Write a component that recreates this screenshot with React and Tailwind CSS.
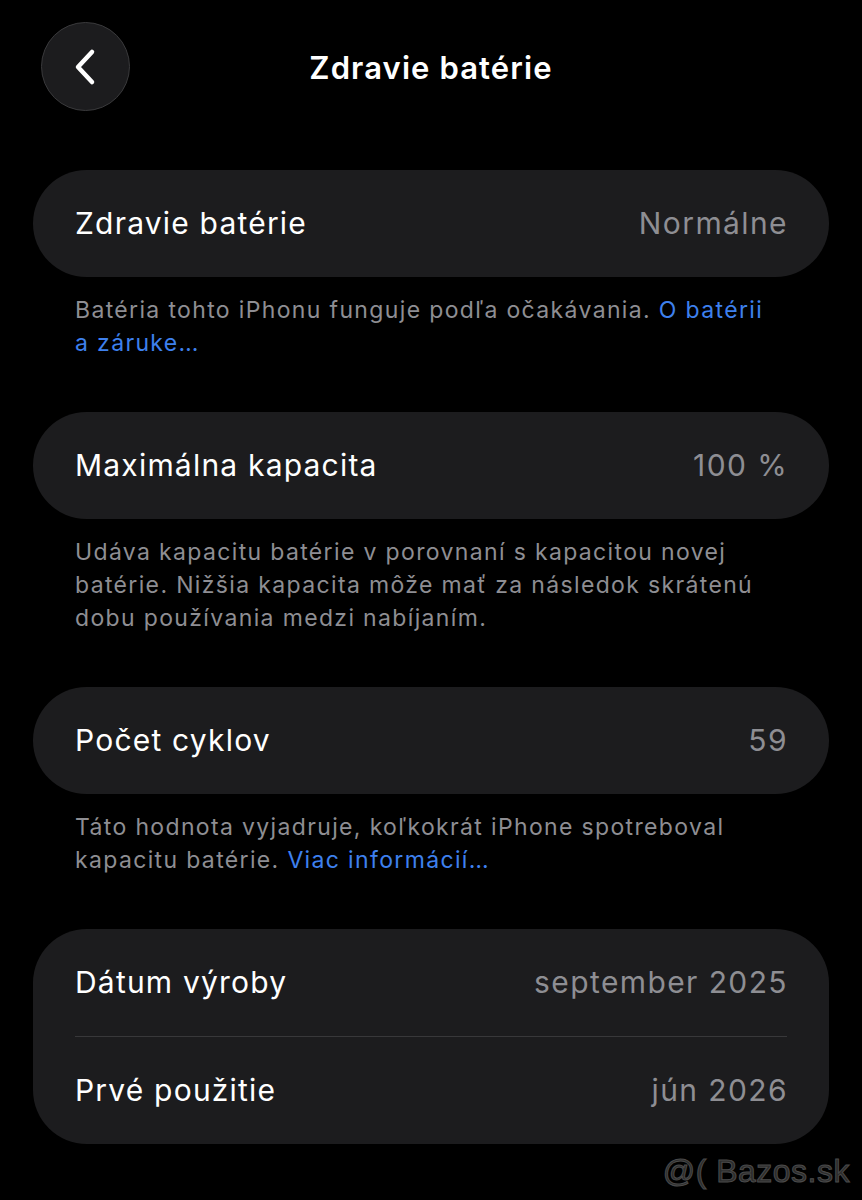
import React from "react";

const font = { fontFamily: "Inter, 'Noto Sans', sans-serif" };

function Row({ label, value }) {
  return (
    <div className="flex h-[107px] items-center justify-between pl-[42px] pr-[41px]">
      <span className="text-[30px] text-white tracking-[1.2px]">{label}</span>
      <span className="text-[30px] text-[#8e8e93] tracking-[1.4px]">{value}</span>
    </div>
  );
}

function Card({ children }) {
  return <div className="mx-[33px] rounded-[54px] bg-[#1c1c1e] overflow-hidden">{children}</div>;
}

function Note({ children }) {
  return (
    <p className="ml-[75px] w-[700px] mt-[17px] mb-[52px] text-[23px] leading-[33px] text-[#8e8e93] tracking-[1.35px]">
      {children}
    </p>
  );
}

export default function App() {
  return (
    <div className="relative min-h-[1200px] w-[862px] bg-black" style={font}>
      <div className="relative flex h-[111px] items-end">
        <button className="ml-[41px] flex h-[89px] w-[89px] items-center justify-center rounded-full border border-[#3a3a3c] bg-[#1c1c1e]">
          <svg width="30" height="40" viewBox="0 0 30 40" fill="none">
            <path d="M21 5 L7 20 L21 35" stroke="white" strokeWidth="4.5" strokeLinecap="round" strokeLinejoin="round" />
          </svg>
        </button>
        <h1 className="absolute left-0 right-0 top-[46px] text-center text-[31px] font-semibold leading-[44px] text-white tracking-[1.1px]">
          Zdravie batérie
        </h1>
      </div>

      <div className="mt-[59px]">
        <Card>
          <Row label="Zdravie batérie" value="Normálne" />
        </Card>
        <Note>
          Batéria tohto iPhonu funguje podľa očakávania.{" "}
          <span className="text-[#3e80ee]">O batérii a záruke…</span>
        </Note>

        <Card>
          <Row label="Maximálna kapacita" value="100 %" />
        </Card>
        <Note>
          Udáva kapacitu batérie v porovnaní s kapacitou novej batérie. Nižšia kapacita môže mať za následok skrátenú dobu používania medzi nabíjaním.
        </Note>

        <Card>
          <Row label="Počet cyklov" value="59" />
        </Card>
        <Note>
          Táto hodnota vyjadruje, koľkokrát iPhone spotreboval kapacitu batérie.{" "}
          <span className="text-[#3e80ee]">Viac informácií…</span>
        </Note>

        <Card>
          <Row label="Dátum výroby" value="september 2025" />
          <div className="mx-[42px] h-px bg-[#38383a]" />
          <Row label="Prvé použitie" value="jún 2026" />
        </Card>
      </div>

      <div
        className="absolute right-[12px] top-[1153px] text-[32px] leading-[36px] text-[#2c2c2c] tracking-[0.5px]"
        style={{ fontFamily: "'Liberation Sans', Arial, sans-serif", WebkitTextStroke: "1px #4a4a4a" }}
      >
        @( Bazos.sk
      </div>
    </div>
  );
}
